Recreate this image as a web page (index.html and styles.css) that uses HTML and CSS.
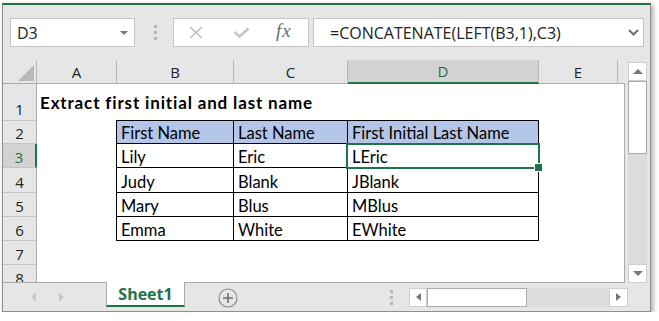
FILE: index.html
```html
<!DOCTYPE html>
<html lang="en">
<head>
  <meta charset="UTF-8" />
  <title>Extract first initial and last name</title>
  <link rel="stylesheet" href="styles.css">
</head>
<body>
  <div class="window">

    <!-- Formula bar -->
    <div class="formula-bar">
      <div class="name-box">
        <span>D3</span>
        <span class="caret"></span>
      </div>
      <div class="grip"><i></i><i></i><i></i></div>
      <div class="fx-box">
        <svg class="icon-cancel" width="16" height="13" viewBox="0 0 16 13">
          <path d="M2 1 L14 12 M14 1 L2 12" stroke="#bdbdbd" stroke-width="1.6" fill="none"/>
        </svg>
        <svg class="icon-enter" width="17" height="11" viewBox="0 0 17 11">
          <polyline points="1.5,5 6.5,9.5 15.5,1.5" stroke="#c4c4c4" stroke-width="2.6" fill="none"/>
        </svg>
        <span class="fx">fx</span>
      </div>
      <div class="formula-input">
        <span>=CONCATENATE(LEFT(B3,1),C3)</span>
        <svg width="11" height="7" viewBox="0 0 11 7">
          <polyline points="1,1 5.5,5.5 10,1" stroke="#6f6f6f" stroke-width="2" fill="none"/>
        </svg>
      </div>
    </div>

    <!-- Grid -->
    <div class="sheet-area">
      <div class="sheet">
        <div class="col-heads">
          <div class="corner"><span class="corner-tri"></span></div>
          <div class="col-head col-a">A</div>
          <div class="col-head col-b">B</div>
          <div class="col-head col-c">C</div>
          <div class="col-head col-d selected">D</div>
          <div class="col-head col-e">E</div>
          <div class="col-fill"></div>
        </div>
        <div class="sheet-body">
          <div class="row-heads">
            <div class="row-head r1">1</div>
            <div class="row-head r2">2</div>
            <div class="row-head r3 selected">3</div>
            <div class="row-head r4">4</div>
            <div class="row-head r5">5</div>
            <div class="row-head r6">6</div>
            <div class="row-head r7">7</div>
            <div class="row-head r8">8</div>
          </div>
          <div class="cells">
            <div class="title">Extract first initial and last name</div>
            <div class="data-table">
              <div class="cell th">First Name</div>
              <div class="cell th">Last Name</div>
              <div class="cell th">First Initial Last Name</div>
              <div class="cell">Lily</div>
              <div class="cell">Eric</div>
              <div class="cell active">LEric</div>
              <div class="cell">Judy</div>
              <div class="cell">Blank</div>
              <div class="cell">JBlank</div>
              <div class="cell">Mary</div>
              <div class="cell">Blus</div>
              <div class="cell">MBlus</div>
              <div class="cell">Emma</div>
              <div class="cell">White</div>
              <div class="cell">EWhite</div>
            </div>
          </div>
        </div>
      </div>
      <div class="vscroll">
        <div class="track">
          <div class="sb-btn"><span class="tri up"></span></div>
          <div class="v-thumb"></div>
          <div class="sb-space"></div>
          <div class="sb-btn"><span class="tri down"></span></div>
        </div>
      </div>
    </div>

    <!-- Sheet tabs -->
    <div class="tab-bar">
      <div class="tab-nav">
        <span class="tri left light"></span>
        <span class="tri right light"></span>
      </div>
      <div class="tab">Sheet1</div>
      <div class="add-sheet">
        <svg width="20" height="20" viewBox="0 0 20 20">
          <circle cx="10" cy="10" r="9" stroke="#8a8a8a" stroke-width="1.2" fill="none"/>
          <path d="M10 5 V15 M5 10 H15" stroke="#6f6f6f" stroke-width="1.6"/>
        </svg>
      </div>
      <div class="grip h"><i></i><i></i><i></i></div>
      <div class="hscroll">
        <div class="sb-btn"><span class="tri left"></span></div>
        <div class="h-thumb"></div>
        <div class="sb-space"></div>
        <div class="sb-btn wide"><span class="tri right"></span></div>
      </div>
    </div>

  </div>
</body>
</html>
```

FILE: styles.css
```css
* {
  box-sizing: border-box;
}

body {
  margin: 0;
  background: #fff;
  font-family: "Open Sans", "Noto Sans", sans-serif;
  color: #222;
}

.window {
  width: 649px;
  height: 309px;
  margin: 3px 0 0 2px;
  display: flex;
  flex-direction: column;
  background: #e6e6e6;
  border: 1px solid #8f8f8f;
  border-top: 2px solid #217346;
  box-shadow: 2px 2px 5px rgba(0, 0, 0, 0.35);
}

/* ---- formula bar ---- */

.formula-bar {
  height: 55px;
  flex: none;
  display: flex;
  align-items: center;
  padding: 0 6px 0 7px;
}

.name-box,
.fx-box,
.formula-input {
  height: 29px;
  background: #fff;
  border: 1px solid #c6c6c6;
  display: flex;
  align-items: center;
}

.name-box {
  width: 125px;
  justify-content: space-between;
  padding: 0 6px 0 6px;
  font-size: 16px;
}

.caret {
  width: 0;
  height: 0;
  border-left: 4px solid transparent;
  border-right: 4px solid transparent;
  border-top: 4px solid #777;
}

.grip {
  display: flex;
  flex-direction: column;
  gap: 3px;
  margin: 0 16px 0 19px;
}

.grip i {
  display: block;
  width: 3px;
  height: 3px;
  background: #b5b5b5;
}

.fx-box {
  width: 136px;
  padding-left: 14px;
}

.icon-cancel {
  margin-right: 29px;
}

.icon-enter {
  margin-right: 26px;
}

.fx {
  font-family: "Liberation Serif", serif;
  font-style: italic;
  font-size: 19px;
  letter-spacing: 1px;
  color: #6b6b6b;
  margin-top: -3px;
}

.formula-input {
  flex: 1;
  margin-left: 4px;
  padding: 0 4px 0 16px;
  justify-content: space-between;
  font-size: 16px;
}

/* ---- sheet ---- */

.sheet-area {
  height: 223px;
  flex: none;
  display: flex;
}

.sheet {
  width: 622px;
  display: flex;
  flex-direction: column;
  border-bottom: 1px solid #ababab;
}

.col-heads {
  height: 24px;
  display: flex;
  font-size: 15px;
}

.corner,
.col-head,
.col-fill {
  height: 24px;
  border-bottom: 1px solid #ababab;
}

.corner {
  width: 34px;
  border-right: 1px solid #b9b9b9;
  display: flex;
  justify-content: flex-end;
  align-items: flex-end;
  padding: 0 2px 2px 0;
}

.corner-tri {
  width: 0;
  height: 0;
  border-left: 16px solid transparent;
  border-bottom: 16px solid #b9b9b9;
}

.col-head {
  display: flex;
  justify-content: center;
  align-items: center;
  line-height: 20px;
  border-right: 1px solid #b9b9b9;
}

.col-a { width: 80px; }
.col-b { width: 117px; }
.col-c { width: 114px; }
.col-d { width: 191px; }
.col-e { width: 79px; }

.col-fill {
  flex: 1;
}

.col-head.selected {
  background: #d2d2d2;
  color: #217346;
  border-bottom: 2px solid #217346;
}

.sheet-body {
  flex: 1;
  display: flex;
  overflow: hidden;
}

.row-heads {
  width: 34px;
  flex: none;
}

.row-head {
  display: flex;
  justify-content: center;
  align-items: flex-end;
  font-size: 15px;
  line-height: 20px;
  border-bottom: 1px solid #c4c4c4;
  border-right: 1px solid #ababab;
  overflow: hidden;
}

.r1 { height: 37px; padding-bottom: 1px; }
.r2 { height: 23px; }
.r3 { height: 24px; }
.r4 { height: 25px; }
.r5 { height: 24px; }
.r6 { height: 24px; }
.r7 { height: 24px; }
.r8 { height: 24px; }

.row-head.selected {
  background: #d2d2d2;
  color: #217346;
  border-right: 2px solid #217346;
}

.cells {
  flex: 1;
  background: #fff;
  border-right: 1px solid #ababab;
  font-family: "Lato", "Liberation Sans", sans-serif;
  font-size: 16.5px;
  color: #000;
}

.title {
  height: 36px;
  display: flex;
  align-items: flex-end;
  padding: 0 0 7px 3px;
  line-height: 20px;
  font-size: 17px;
  font-weight: bold;
  letter-spacing: 0.85px;
}

.data-table {
  width: 423px;
  margin-left: 79px;
  display: grid;
  grid-template-columns: 116px 113px 190px;
  grid-template-rows: 22px 23px 24px 23px 23px;
  gap: 1px;
  background: #000;
  border: 1px solid #000;
}

.cell {
  background: #fff;
  display: flex;
  align-items: flex-end;
  padding: 0 3px 0 4px;
  line-height: 20px;
  white-space: nowrap;
}

.cell.th {
  background: #b4c6e7;
}

.cell.active {
  position: relative;
}

.cell.active::after {
  content: "";
  position: absolute;
  left: -2px;
  top: -1px;
  right: -2px;
  bottom: -2px;
  border: 2px solid #217346;
  z-index: 1;
}

.cell.active::before {
  content: "";
  position: absolute;
  right: -5px;
  bottom: -5px;
  width: 7px;
  height: 7px;
  background: #217346;
  border: 1px solid #fff;
  z-index: 2;
}

/* ---- scrollbars ---- */

.vscroll {
  flex: 1;
  padding: 2px 3px 0 3px;
  display: flex;
}

.track {
  width: 19px;
  display: flex;
  flex-direction: column;
  background: #dcdcdc;
}

.sb-btn {
  width: 19px;
  height: 19px;
  flex: none;
  background: #fff;
  border: 1px solid #cfcfcf;
  display: flex;
  justify-content: center;
  align-items: center;
}

.v-thumb {
  height: 73px;
  background: #fff;
  border: 1px solid #ababab;
}

.sb-space {
  flex: 1;
}

.tri {
  width: 0;
  height: 0;
  display: block;
}

.tri.up {
  border-left: 5px solid transparent;
  border-right: 5px solid transparent;
  border-bottom: 5px solid #777;
}

.tri.down {
  border-left: 5px solid transparent;
  border-right: 5px solid transparent;
  border-top: 5px solid #777;
}

.tri.left {
  border-top: 4px solid transparent;
  border-bottom: 4px solid transparent;
  border-right: 5px solid #777;
}

.tri.right {
  border-top: 4px solid transparent;
  border-bottom: 4px solid transparent;
  border-left: 5px solid #777;
}

.tri.light {
  border-top-width: 5px;
  border-bottom-width: 5px;
  border-left-color: #c8c8c8;
  border-right-color: #c8c8c8;
}

/* ---- tab bar ---- */

.tab-bar {
  flex: 1;
  display: flex;
  align-items: center;
}

.tab-nav {
  width: 103px;
  align-self: stretch;
  display: flex;
  align-items: center;
  gap: 23px;
  padding-left: 28px;
}

.tab {
  width: 79px;
  height: 25px;
  align-self: flex-start;
  margin-top: -1px;
  background: #fff;
  border-left: 1px solid #ababab;
  border-right: 1px solid #ababab;
  border-bottom: 2px solid #217346;
  display: flex;
  justify-content: center;
  align-items: center;
  font-size: 16px;
  font-weight: bold;
  color: #217346;
}

.add-sheet {
  margin-left: 33px;
  display: flex;
  margin-top: 1px;
}

.grip.h {
  margin: 0 16px 0 auto;
}

.hscroll {
  width: 219px;
  height: 19px;
  margin-right: 22px;
  display: flex;
  background: #dcdcdc;
}

.sb-btn.wide {
  margin-left: 2px;
}

.hscroll .sb-btn {
  width: 18px;
}

.hscroll .sb-btn.wide {
  width: 19px;
}

.h-thumb {
  width: 100px;
  background: #fff;
  border: 1px solid #ababab;
}
```
